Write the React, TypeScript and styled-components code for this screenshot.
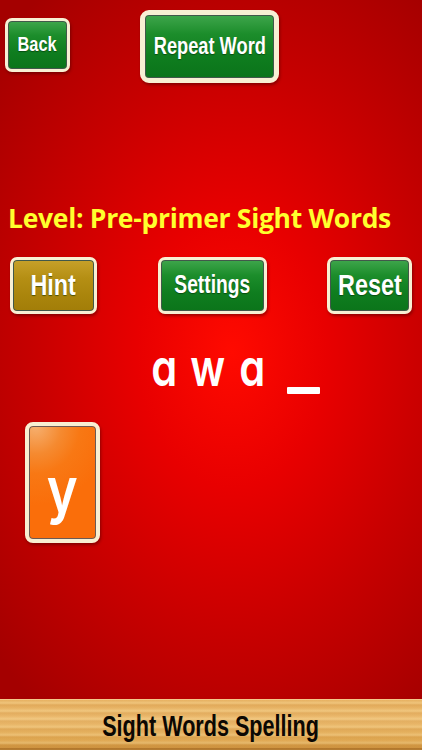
import React from "react";
import styled, { createGlobalStyle, css } from "styled-components";

const GlobalStyle = createGlobalStyle`
  html, body { margin: 0; padding: 0; background: #a00000; }
  * { box-sizing: border-box; }
`;

const Screen = styled.div`
  width: 422px;
  height: 750px;
  display: flex;
  flex-direction: column;
  overflow: hidden;
  background: radial-gradient(
    ellipse 75% 60% at 55% 47%,
    #ff0a00 0%,
    #e80000 30%,
    #c80000 62%,
    #a40000 100%
  );
`;

const Stage = styled.main`
  flex: 1;
  display: flex;
  flex-direction: column;
`;

const TopBar = styled.div`
  display: flex;
  align-items: flex-start;
  gap: 70px;
  padding: 10px 0 0 5px;
`;

const tones = {
  green: css`
    background: linear-gradient(180deg, #3fa64c 0%, #1c8d2b 30%, #0f7d1f 65%, #0b741a 100%);
  `,
  gold: css`
    background: linear-gradient(180deg, #c7a12a 0%, #b58f14 35%, #aa850c 70%, #a27d08 100%);
  `,
};

const GameButton = styled.button<{
  $tone: "green" | "gold";
  $w: number;
  $h: number;
  $fs: number;
  $frame?: number;
}>`
  width: ${(p) => p.$w}px;
  height: ${(p) => p.$h}px;
  flex: none;
  display: flex;
  align-items: center;
  justify-content: center;
  padding: 0 0 2px;
  border: ${(p) => p.$frame ?? 3}px solid #f8f0d4;
  border-radius: ${(p) => ((p.$frame ?? 3) > 3 ? 9 : 7)}px;
  box-shadow: inset 0 0 0 1px #41584a, 1px 2px 3px rgba(60, 0, 0, 0.45);
  ${(p) => tones[p.$tone]}
  color: #ffffff;
  font-family: "Liberation Sans", Arial, sans-serif;
  font-weight: 700;
  font-size: ${(p) => p.$fs}px;
  text-shadow: 0 1px 1px rgba(0, 40, 0, 0.55);
  cursor: pointer;
  overflow: hidden;
`;

const Narrow = styled.span<{ $scale: number }>`
  display: inline-block;
  white-space: nowrap;
  transform: scaleX(${(p) => p.$scale});
`;

const BackButton = styled(GameButton)`
  margin-top: 8px;
`;

const LevelTitle = styled.h1`
  margin: 120px 0 0 8px;
  font-family: "Comic Sans MS", "Open Sans", "DejaVu Sans", sans-serif;
  font-weight: 700;
  font-size: 26.5px;
  line-height: 30px;
  color: #ffff2e;
  letter-spacing: -0.3px;
  white-space: nowrap;
`;

const ControlRow = styled.div`
  display: flex;
  justify-content: space-between;
  align-items: center;
  padding: 0 10px;
  margin-top: 24px;
`;

const WordRow = styled.div`
  display: flex;
  align-items: flex-end;
  padding-left: 142px;
  margin-top: 30px;
  height: 46px;
`;

const LetterSlot = styled.span`
  width: 44px;
  display: flex;
  justify-content: center;
`;

const Letter = styled.span`
  display: inline-block;
  transform: scaleX(0.8);
  font-family: "Inter", "Open Sans", sans-serif;
  font-feature-settings: "cv11" 1;
  font-weight: 600;
  font-size: 52px;
  line-height: 44px;
  color: #ffffff;
`;

const Blank = styled.span`
  width: 33px;
  height: 7px;
  margin-bottom: -4px;
  margin-left: 13px;
  border-radius: 1px;
  background: #ffffff;
`;

const TileArea = styled.div`
  display: flex;
  padding-left: 25px;
  margin-top: 32px;
`;

const LetterTile = styled.div`
  width: 75px;
  height: 121px;
  display: flex;
  align-items: center;
  justify-content: center;
  padding-top: 14px;
  border: 4px solid #f8efd2;
  border-radius: 8px;
  box-shadow: inset 0 0 0 1px #6b5a55, 1px 2px 3px rgba(60, 0, 0, 0.45);
  background: radial-gradient(ellipse 110% 70% at 10% 0%, #f6b070 0%, #f58a30 35%, #f87814 60%, #fa6e0a 100%);
  color: #ffffff;
  font-family: "Inter", "Open Sans", sans-serif;
  font-weight: 600;
  font-size: 62px;
  line-height: 1;
`;

const TileGlyph = styled.span`
  display: inline-block;
  transform: scaleX(0.85);
`;

const WoodBar = styled.footer`
  height: 51px;
  flex: none;
  display: flex;
  align-items: center;
  justify-content: center;
  padding-top: 2px;
  border-top: 1px solid #f4c98a;
  background:
    repeating-linear-gradient(
      180deg,
      rgba(255, 230, 170, 0) 0px,
      rgba(255, 230, 170, 0.35) 3px,
      rgba(180, 110, 30, 0.12) 5px,
      rgba(255, 230, 170, 0) 8px
    ),
    linear-gradient(180deg, #e6b060 0%, #eab86c 40%, #e0a852 80%, #c98e3c 100%);
  box-shadow: inset 0 -2px 0 rgba(150, 90, 20, 0.5);
`;

const WoodTitle = styled.span`
  font-family: "Liberation Sans", Arial, sans-serif;
  font-weight: 700;
  font-size: 30px;
  color: #0c0803;
`;

export default function App() {
  return (
    <>
      <GlobalStyle />
      <Screen>
        <Stage>
          <TopBar>
            <BackButton $tone="green" $w={65} $h={54} $fs={21}>
              <Narrow $scale={0.78}>Back</Narrow>
            </BackButton>
            <GameButton $tone="green" $w={139} $h={73} $fs={24} $frame={5}>
              <Narrow $scale={0.76}>Repeat Word</Narrow>
            </GameButton>
          </TopBar>
          <LevelTitle>Level: Pre-primer Sight Words</LevelTitle>
          <ControlRow>
            <GameButton $tone="gold" $w={87} $h={57} $fs={30}>
              <Narrow $scale={0.78}>Hint</Narrow>
            </GameButton>
            <GameButton $tone="green" $w={109} $h={57} $fs={26}>
              <Narrow $scale={0.74}>Settings</Narrow>
            </GameButton>
            <GameButton $tone="green" $w={85} $h={57} $fs={30}>
              <Narrow $scale={0.78}>Reset</Narrow>
            </GameButton>
          </ControlRow>
          <WordRow>
            <LetterSlot>
              <Letter>a</Letter>
            </LetterSlot>
            <LetterSlot>
              <Letter>w</Letter>
            </LetterSlot>
            <LetterSlot>
              <Letter>a</Letter>
            </LetterSlot>
            <Blank />
          </WordRow>
          <TileArea>
            <LetterTile>
              <TileGlyph>y</TileGlyph>
            </LetterTile>
          </TileArea>
        </Stage>
        <WoodBar>
          <WoodTitle>
            <Narrow $scale={0.72}>Sight Words Spelling</Narrow>
          </WoodTitle>
        </WoodBar>
      </Screen>
    </>
  );
}
